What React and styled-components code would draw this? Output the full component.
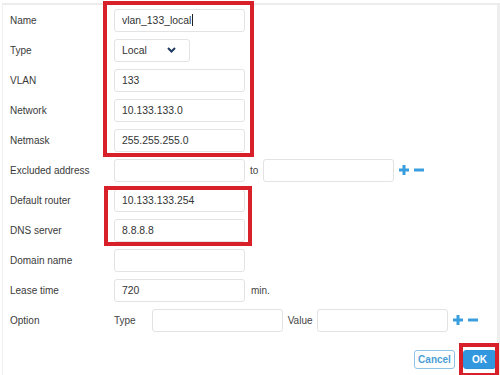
import styled, { createGlobalStyle } from "styled-components";

const Global = createGlobalStyle`
  body {
    margin: 0;
    background: #ffffff;
    font-family: "Liberation Sans", Arial, sans-serif;
  }
`;

const Panel = styled.div`
  position: relative;
  margin: 3px 0 0 2px;
  width: 498px;
  height: 380px;
  box-sizing: border-box;
  border-top: 2px solid #ececec;
  border-left: 1px solid #f0f0f0;
  border-right: 3px solid #eeeeee;
  padding: 0 0 0 7px;
  color: #3a3a3a;
  font-size: 10px;
`;

const Row = styled.div`
  display: flex;
  align-items: center;
  height: 30px;
`;

const Label = styled.span`
  width: 104px;
  flex-shrink: 0;
`;

const Input = styled.div`
  box-sizing: border-box;
  width: ${(p) => p.$w || 131}px;
  height: 23px;
  border: 1px solid #e3e3e3;
  border-radius: 3px;
  padding-left: 7px;
  display: flex;
  align-items: center;
  color: #333;
  font-size: 10.4px;
  flex-shrink: 0;
`;

const Cursor = styled.span`
  display: inline-block;
  width: 1px;
  height: 12px;
  background: #222;
  margin-left: 1px;
`;

const Select = styled(Input)`
  justify-content: space-between;
  padding-right: 13px;
`;

const Text = styled.span`
  margin: 0 ${(p) => p.$r ?? 5}px 0 ${(p) => p.$l ?? 5}px;
  color: #444;
`;

const PlusMinus = styled.div`
  display: flex;
  align-items: center;
  gap: 5px;
  margin-left: 5px;
`;

const Footer = styled.div`
  display: flex;
  justify-content: flex-end;
  gap: 8px;
  margin-top: 15px;
  padding-right: 1px;
`;

const Button = styled.button`
  box-sizing: border-box;
  width: ${(p) => (p.$primary ? 33 : 41)}px;
  height: 19px;
  padding: 0;
  border-radius: 3px;
  font-family: inherit;
  font-size: 10px;
  font-weight: bold;
  border: 1px solid ${(p) => (p.$primary ? "#2e93db" : "#8fc3e6")};
  background: ${(p) => (p.$primary ? "#3198e0" : "#ffffff")};
  color: ${(p) => (p.$primary ? "#ffffff" : "#4b9ed6")};
`;

const Highlight = styled.div`
  position: absolute;
  box-sizing: border-box;
  border: 4px solid #d8202a;
  left: ${(p) => p.$x}px;
  top: ${(p) => p.$y}px;
  width: ${(p) => p.$w}px;
  height: ${(p) => p.$h}px;
  pointer-events: none;
`;

const Chevron = () => (
  <svg width="9" height="6" viewBox="0 0 9 6">
    <path d="M1 1l3.5 3.5L8 1" fill="none" stroke="#1f3b5e" strokeWidth="2" />
  </svg>
);

const AddRemove = () => (
  <PlusMinus>
    <svg width="10" height="10" viewBox="0 0 10 10">
      <path d="M5 0v10M0 5h10" stroke="#3a9ede" strokeWidth="3" />
    </svg>
    <svg width="10" height="10" viewBox="0 0 10 10">
      <path d="M0 5h10" stroke="#3a9ede" strokeWidth="3" />
    </svg>
  </PlusMinus>
);

export default function App() {
  return (
    <>
      <Global />
      <Panel>
        <Row>
          <Label>Name</Label>
          <Input>
            vlan_133_local
            <Cursor />
          </Input>
        </Row>
        <Row>
          <Label>Type</Label>
          <Select $w={76}>
            Local
            <Chevron />
          </Select>
        </Row>
        <Row>
          <Label>VLAN</Label>
          <Input>133</Input>
        </Row>
        <Row>
          <Label>Network</Label>
          <Input>10.133.133.0</Input>
        </Row>
        <Row>
          <Label>Netmask</Label>
          <Input>255.255.255.0</Input>
        </Row>
        <Row>
          <Label>Excluded address</Label>
          <Input />
          <Text $l={5} $r={5}>to</Text>
          <Input />
          <AddRemove />
        </Row>
        <Row>
          <Label>Default router</Label>
          <Input>10.133.133.254</Input>
        </Row>
        <Row>
          <Label>DNS server</Label>
          <Input>8.8.8.8</Input>
        </Row>
        <Row>
          <Label>Domain name</Label>
          <Input />
        </Row>
        <Row>
          <Label>Lease time</Label>
          <Input>720</Input>
          <Text $l={6}>min.</Text>
        </Row>
        <Row>
          <Label>Option</Label>
          <Text $l={0} $r={16}>Type</Text>
          <Input />
          <Text $l={5} $r={4}>Value</Text>
          <Input />
          <AddRemove />
        </Row>
        <Footer>
          <Button>Cancel</Button>
          <Button $primary>OK</Button>
        </Footer>
        <Highlight $x={100} $y={-4} $w={151} $h={156} />
        <Highlight $x={101} $y={181} $w={148} $h={60} />
        <Highlight $x={456} $y={338} $w={40} $h={34} />
      </Panel>
    </>
  );
}
